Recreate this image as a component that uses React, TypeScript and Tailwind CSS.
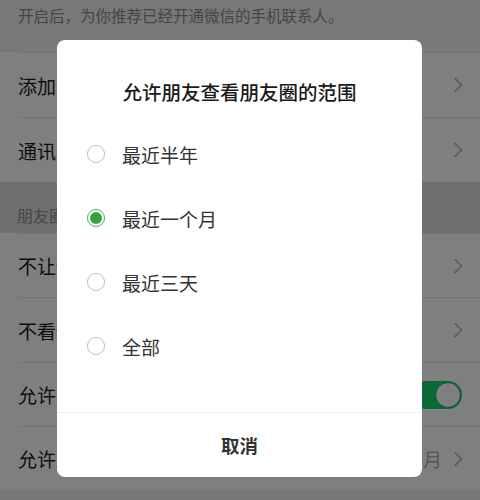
import React, { useState } from "react";

const FONT = { fontFamily: '"Noto Sans CJK SC", "Noto Sans", sans-serif' };

function Chevron() {
  return (
    <svg width="10" height="16" viewBox="0 0 10 16" fill="none" className="shrink-0">
      <path d="M2 1.5 L8.5 8 L2 14.5" stroke="#b0b0b0" strokeWidth="1.6" strokeLinecap="round" strokeLinejoin="round" />
    </svg>
  );
}

function Row({ label, h, children }: { label: string; h: string; children?: React.ReactNode }) {
  return (
    <div className={`${h} bg-white pl-[18px]`}>
      <div className="h-full flex items-center justify-between pr-[17px] border-t border-[#e8e8e8]">
        <span className="text-[19px] text-[#1a1a1a] leading-none">{label}</span>
        {children}
      </div>
    </div>
  );
}

const options = ["最近半年", "最近一个月", "最近三天", "全部"];

export default function App() {
  const [selected, setSelected] = useState(1);

  return (
    <div className="relative w-[480px] h-[500px] overflow-hidden bg-[#efefef]" style={FONT}>
      {/* settings page behind */}
      <div className="h-[52px] pl-[18px] pt-[5px] bg-[#f1f1f1]">
        <p className="text-[15.5px] leading-[20px] text-[#8a8a8a]">开启后，为你推荐已经开通微信的手机联系人。</p>
      </div>
      <Row label="添加我的方式" h="h-[65px]">
        <Chevron />
      </Row>
      <Row label="通讯录黑名单" h="h-[65px]">
        <Chevron />
      </Row>
      <div className="h-[51px] bg-[#dedede] pl-[17px] pb-[8px] flex items-end">
        <span className="text-[16px] leading-[20px] text-[#8c8c8c]">朋友圈和视频动态</span>
      </div>
      <Row label="不让他（她）看" h="h-[64px]">
        <Chevron />
      </Row>
      <Row label="不看他（她）" h="h-[65px]">
        <Chevron />
      </Row>
      <Row label="允许陌生人查看十条朋友圈" h="h-[64px]">
        <div className="w-[50px] h-[28px] rounded-full bg-[#13d26a] flex items-center justify-end p-[1px] mr-[1px]">
          <div className="w-[26px] h-[26px] rounded-full bg-white border border-[#0fa956]" />
        </div>
      </Row>
      <Row label="允许朋友查看朋友圈的范围" h="h-[64px]">
        <div className="flex items-center gap-[11px]">
          <span className="text-[19px] leading-none text-[#a8a8a8]">最近一个月</span>
          <Chevron />
        </div>
      </Row>

      {/* overlay */}
      <div className="absolute inset-0 bg-black/50" />

      {/* dialog */}
      <div className="absolute left-[57px] top-[40px] w-[365px] h-[437px] bg-white rounded-[8px] flex flex-col">
        <h2 className="pt-[40px] h-[64px] text-center text-[19.5px] leading-[24px] font-medium text-[#1a1a1a]">
          允许朋友查看朋友圈的范围
        </h2>
        <div className="mt-[18px] flex flex-col">
          {options.map((opt, i) => (
            <button
              key={opt}
              type="button"
              onClick={() => setSelected(i)}
              className="h-[64px] flex items-center pl-[30px] gap-[17px] text-left"
            >
              {selected === i ? (
                <span className="w-[18px] h-[18px] rounded-full border-[1.5px] border-[#3fae55] flex items-center justify-center">
                  <span className="w-[12px] h-[12px] rounded-full bg-[#2ea443]" />
                </span>
              ) : (
                <span className="w-[18px] h-[18px] rounded-full border-[1.5px] border-[#bdbdbd]" />
              )}
              <span className="text-[19px] leading-none text-[#333333]">{opt}</span>
            </button>
          ))}
        </div>
        <div className="flex-1" />
        <button type="button" className="h-[65px] border-t border-[#f0f0f0] flex items-center justify-center">
          <span className="text-[18.5px] leading-none font-semibold text-[#333333]">取消</span>
        </button>
      </div>
    </div>
  );
}
